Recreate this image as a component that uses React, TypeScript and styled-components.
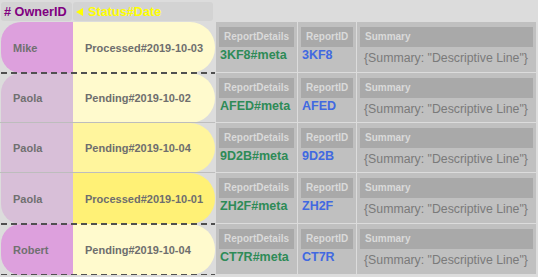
import React from "react";
import styled, { createGlobalStyle, css } from "styled-components";

const Global = createGlobalStyle`
  html, body { margin: 0; padding: 0; background: #dcdcdc; }
  body { font-family: "Liberation Sans", Arial, sans-serif; }
`;

const Page = styled.div`
  padding: 2px 0 0 1px;
`;

const Header = styled.div`
  display: flex;
  gap: 1px;
  height: 19px;
  margin-bottom: 1px;
`;

const HeadCell = styled.div<{ $w: number; $color: string }>`
  width: ${(p) => p.$w}px;
  background: #d3d3d3;
  border-radius: 3px;
  display: flex;
  align-items: center;
  gap: 5px;
  padding-left: 3px;
  box-sizing: border-box;
  font-weight: bold;
  font-size: 12.7px;
  color: ${(p) => p.$color};
`;

const Row = styled.div<{ $h: number }>`
  display: flex;
  height: ${(p) => p.$h}px;
`;

type Sep = "dash" | "line" | "none";

const Pill = styled.div<{ $sep: Sep }>`
  display: flex;
  position: relative;
  width: 214px;
  ${(p) =>
    p.$sep === "dash" &&
    css`
      &::after {
        content: "";
        position: absolute;
        z-index: 2;
        left: 0;
        right: 0;
        bottom: -1px;
        height: 2px;
        background: repeating-linear-gradient(
          to right,
          #505050 0 6px,
          transparent 6px 10px
        );
      }
    `}
  ${(p) =>
    p.$sep === "line" &&
    css`
      &::after {
        content: "";
        position: absolute;
        z-index: 2;
        left: -1px;
        right: 0;
        bottom: 0;
        height: 1px;
        background: #bdbdbd;
      }
    `}
`;

const OwnerCell = styled.div<{ $bg: string; $top: boolean; $bottom: boolean }>`
  width: 72px;
  background: ${(p) => p.$bg};
  border-top-left-radius: ${(p) => (p.$top ? "20px" : "0")};
  border-bottom-left-radius: ${(p) => (p.$bottom ? "20px" : "0")};
  display: flex;
  align-items: center;
  padding-left: 12px;
  box-sizing: border-box;
  font-weight: bold;
  font-size: 11px;
  color: #707070;
`;

const StatusCell = styled.div<{ $bg: string }>`
  width: 142px;
  background: ${(p) => p.$bg};
  border-radius: 0 25px 25px 0;
  display: flex;
  align-items: center;
  padding-left: 12px;
  box-sizing: border-box;
  font-weight: bold;
  font-size: 11px;
  color: #6e6e6e;
`;

const Attrs = styled.div`
  display: flex;
  gap: 1px;
  padding-bottom: 1px;
  margin-left: 1px;
`;

const AttrCell = styled.div<{ $w: number }>`
  width: ${(p) => p.$w}px;
  background: #c0c0c0;
  display: flex;
  flex-direction: column;
  padding: 5px 3px 0;
  box-sizing: border-box;
`;

const Label = styled.div<{ $fill?: boolean }>`
  height: 20px;
  line-height: 20px;
  background: #a9a9a9;
  color: #dadada;
  font-weight: bold;
  font-size: 10px;
  padding: 0 5px;
  align-self: ${(p) => (p.$fill ? "stretch" : "flex-start")};
`;

const Value = styled.div<{ $color: string }>`
  margin-top: 1px;
  padding-left: 1px;
  font-weight: bold;
  font-size: 12.5px;
  line-height: 14px;
  color: ${(p) => p.$color};
`;

const SummaryValue = styled.div`
  margin-top: 4px;
  padding-left: 4px;
  font-size: 12.3px;
  line-height: 14px;
  color: #7a7a7a;
`;

const Tri = styled.svg`
  width: 7px;
  height: 8px;
  flex: none;
`;

const PLUM = "#dda0dd";
const THISTLE = "#d8bfd8";

const rows = [
  { h: 51, owner: "Mike", ob: PLUM, top: true, bottom: true, status: "Processed#2019-10-03", sb: "#fffacd", id: "3KF8", sep: "dash" as Sep },
  { h: 50, owner: "Paola", ob: THISTLE, top: true, bottom: false, status: "Pending#2019-10-02", sb: "#fffacd", id: "AFED", sep: "line" as Sep },
  { h: 50, owner: "Paola", ob: THISTLE, top: false, bottom: false, status: "Pending#2019-10-04", sb: "#fff59d", id: "9D2B", sep: "line" as Sep },
  { h: 51, owner: "Paola", ob: THISTLE, top: false, bottom: true, status: "Processed#2019-10-01", sb: "#fff176", id: "ZH2F", sep: "dash" as Sep },
  { h: 51, owner: "Robert", ob: PLUM, top: true, bottom: true, status: "Pending#2019-10-04", sb: "#fffacd", id: "CT7R", sep: "dash" as Sep },
];

export default function App() {
  return (
    <>
      <Global />
      <Page>
        <Header>
          <HeadCell $w={71} $color="#800080"># OwnerID</HeadCell>
          <HeadCell $w={140} $color="#ffff00">
            <Tri viewBox="0 0 7 8">
              <polygon points="0,4 7,0 7,8" fill="#ffff00" />
            </Tri>
            Status#Date
          </HeadCell>
        </Header>
        {rows.map((r, i) => (
          <Row key={i} $h={r.h}>
            <Pill $sep={r.sep}>
              <OwnerCell $bg={r.ob} $top={r.top} $bottom={r.bottom}>
                {r.owner}
              </OwnerCell>
              <StatusCell $bg={r.sb}>{r.status}</StatusCell>
            </Pill>
            <Attrs>
              <AttrCell $w={81}>
                <Label>ReportDetails</Label>
                <Value $color="#2e8b57">{r.id}#meta</Value>
              </AttrCell>
              <AttrCell $w={58}>
                <Label>ReportID</Label>
                <Value $color="#4169e1">{r.id}</Value>
              </AttrCell>
              <AttrCell $w={179}>
                <Label $fill>Summary</Label>
                <SummaryValue>{'{Summary: "Descriptive Line"}'}</SummaryValue>
              </AttrCell>
            </Attrs>
          </Row>
        ))}
      </Page>
    </>
  );
}
